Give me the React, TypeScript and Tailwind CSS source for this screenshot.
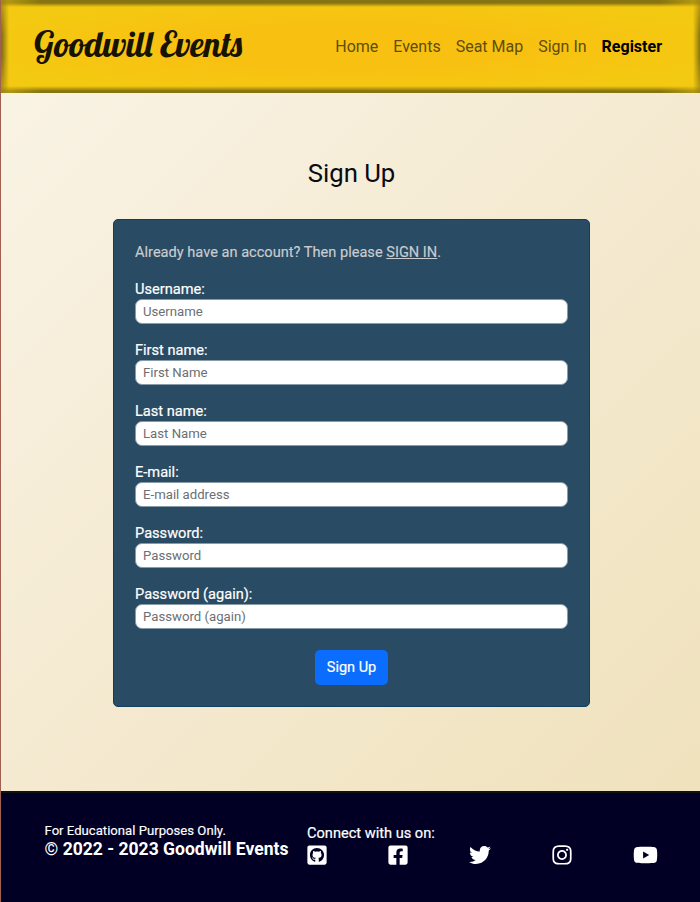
import React from "react";
import {
  FaGithubSquare,
  FaFacebookSquare,
  FaTwitter,
  FaInstagram,
  FaYoutube,
} from "react-icons/fa";

const fields = [
  { label: "Username:", placeholder: "Username", type: "text" },
  { label: "First name:", placeholder: "First Name", type: "text" },
  { label: "Last name:", placeholder: "Last Name", type: "text" },
  { label: "E-mail:", placeholder: "E-mail address", type: "email" },
  { label: "Password:", placeholder: "Password", type: "password" },
  { label: "Password (again):", placeholder: "Password (again)", type: "password" },
];

const links = ["Home", "Events", "Seat Map", "Sign In"];

function Header() {
  return (
    <header className="relative flex h-[93px] items-center justify-between bg-[radial-gradient(ellipse_at_center,#f8c112_35%,#f4c911_75%)] pr-[38px] pl-[33px]">
      {/* Olive shading along the edges, softer towards the corners */}
      <div className="pointer-events-none absolute inset-0 bg-[linear-gradient(to_bottom,#857411_3px,transparent_7px,transparent_86px,#857411_91px)] [mask-image:linear-gradient(to_right,rgba(0,0,0,0.5),black_40px,black_calc(100%-40px),rgba(0,0,0,0.5))]" />
      <div className="pointer-events-none absolute inset-0 bg-[linear-gradient(to_right,#857411_1px,transparent_8px,transparent_calc(100%-7px),#857411_100%)] [mask-image:linear-gradient(to_bottom,rgba(0,0,0,0.5),black_35px,black_58px,rgba(0,0,0,0.5))]" />
      <a
        href="#"
        className="relative pb-[5px] font-[Lobster,'Liberation_Serif',serif] text-[35px] leading-none whitespace-nowrap text-[#171303]"
      >
        Goodwill Events
      </a>
      <nav className="relative flex gap-[15px] text-[16px] leading-6 whitespace-nowrap text-[#5f4d0b]">
        {links.map((link) => (
          <a key={link} href="#">
            {link}
          </a>
        ))}
        <a href="#" className="font-bold text-black">
          Register
        </a>
      </nav>
    </header>
  );
}

function SignUpForm() {
  return (
    <form className="ml-[112px] h-[488px] w-[477px] rounded-[5px] border border-[#103f60] bg-[#294b63] px-[21px] pt-[21px] text-[14.6px]">
      <p className="leading-[22px] text-[#c9cdd0] [-webkit-text-stroke:0.15px_currentColor]">
        Already have an account? Then please{" "}
        <a href="#" className="underline">
          SIGN IN
        </a>
        .
      </p>
      <div className="mt-[15px] flex flex-col gap-[15px]">
        {fields.map((field) => (
          <label key={field.label} className="block text-white">
            <span className="block h-[21px] leading-[22px] [-webkit-text-stroke:0.2px_currentColor]">
              {field.label}
            </span>
            <input
              type={field.type}
              placeholder={field.placeholder}
              className="block h-[25px] w-full rounded-[7px] border border-[#8a9ba8] bg-white px-[7px] text-[13.2px] placeholder:text-[#6c6f73]"
            />
          </label>
        ))}
      </div>
      <button
        type="button"
        className="mx-auto mt-[21px] block h-[35px] w-[73px] rounded-[5px] bg-[#0a6dfd] pt-px text-[14.5px] text-white [-webkit-text-stroke:0.2px_currentColor]"
      >
        Sign Up
      </button>
    </form>
  );
}

function Footer() {
  return (
    <footer className="-ml-px flex h-[111px] border-t-2 border-l border-t-[#10120f] border-l-[#451525] bg-[#010024] pt-[29px] pl-[43.5px] text-white">
      <div className="w-[262.5px] whitespace-nowrap">
        <p className="text-[13.15px] leading-[18px] [-webkit-text-stroke:0.15px_currentColor]">
          For Educational Purposes Only.
        </p>
        <p className="text-[17.55px] leading-[19px] font-bold">© 2022 - 2023 Goodwill Events</p>
      </div>
      <div className="w-[351px]">
        <p className="pt-px text-[14.6px] leading-[21px] [-webkit-text-stroke:0.2px_currentColor]">
          Connect with us on:
        </p>
        <div className="flex h-[22px] items-center justify-between text-[22px]">
          <FaGithubSquare className="w-[20px]" />
          <FaFacebookSquare className="w-[20px]" />
          <FaTwitter className="w-[22px]" />
          <FaInstagram className="w-[20px]" />
          <FaYoutube className="w-[25px]" />
        </div>
      </div>
    </footer>
  );
}

export default function App() {
  return (
    <div className="h-[902px] w-[700px] overflow-hidden border-l border-[#a05f50] bg-[linear-gradient(135deg,#f9f3e4_8%,#f5ebd3_45%,#f0e2bd_92%)] font-[Roboto,sans-serif]">
      <Header />
      <main className="h-[698px] pt-[61px]">
        <h1 className="mb-[26px] pl-[2px] text-center text-[25.7px] leading-[39px] text-[#080c12]">
          Sign Up
        </h1>
        <SignUpForm />
      </main>
      <Footer />
    </div>
  );
}
